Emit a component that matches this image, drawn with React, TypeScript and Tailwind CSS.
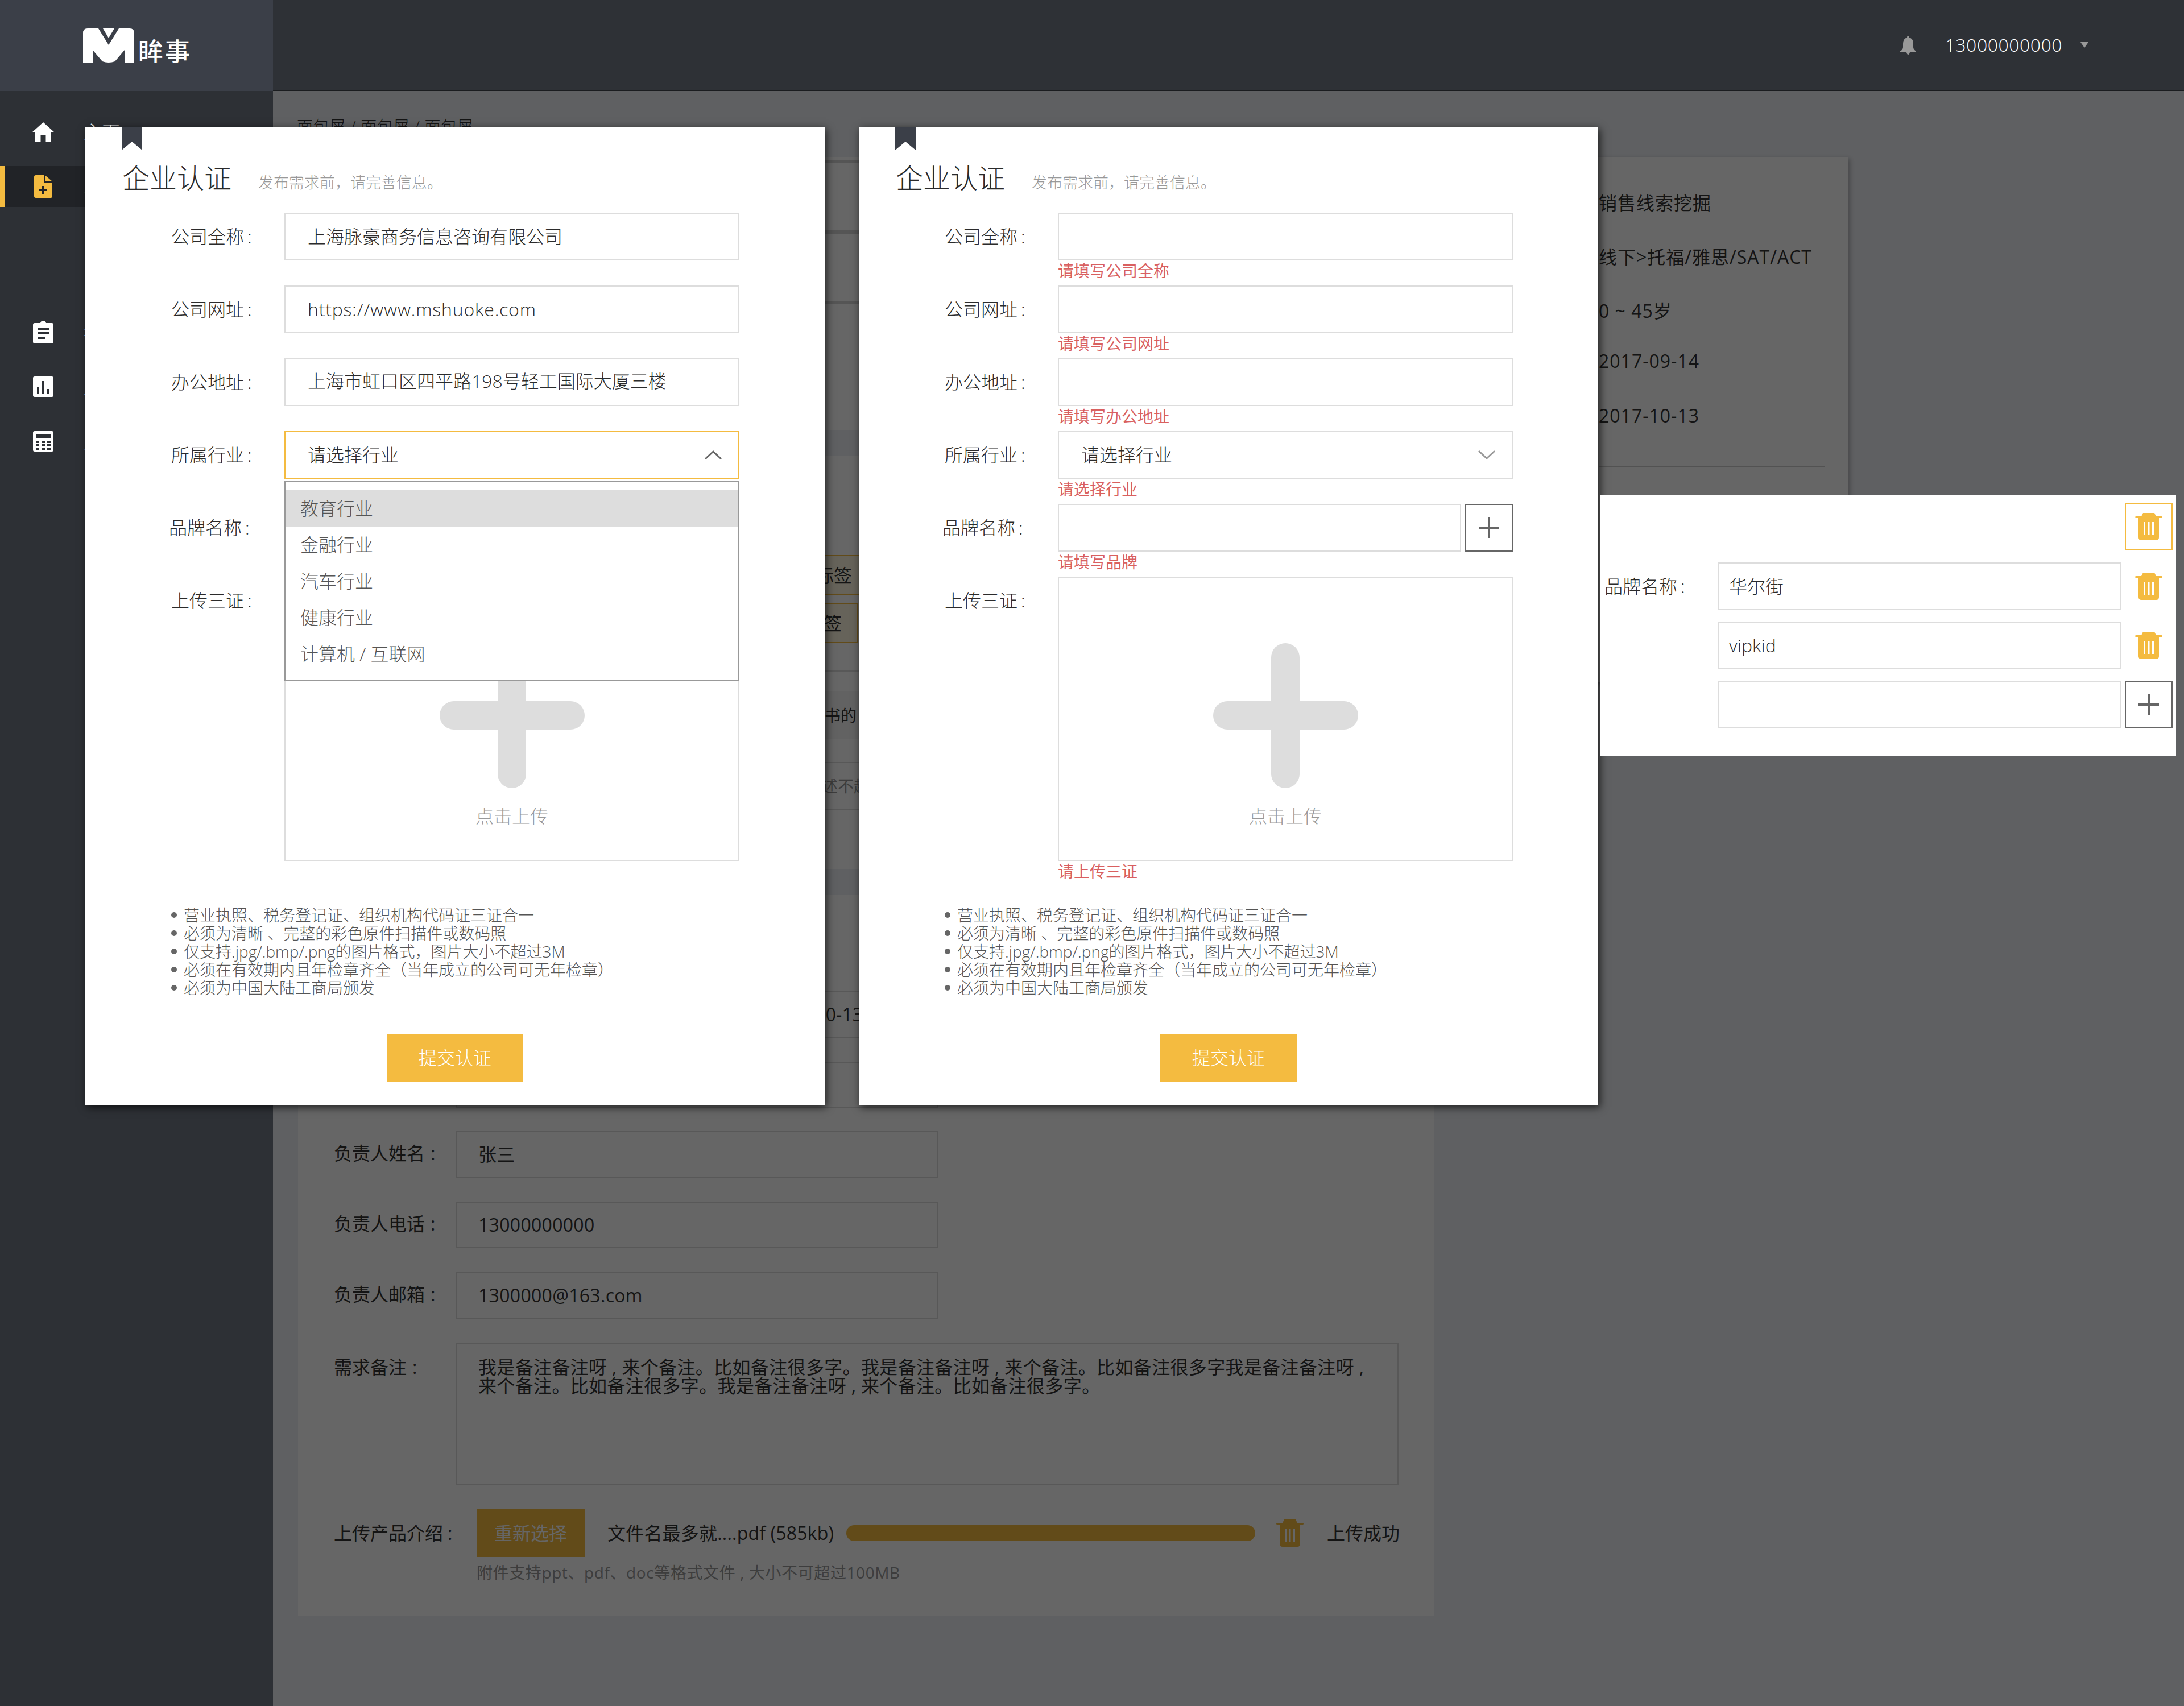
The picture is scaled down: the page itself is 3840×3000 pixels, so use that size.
import type { ReactNode } from "react";

const hints = [
  "营业执照、税务登记证、组织机构代码证三证合一",
  "必须为清晰 、完整的彩色原件扫描件或数码照",
  "仅支持.jpg/.bmp/.png的图片格式\uFF0C图片大小不超过3M",
  "必须在有效期内且年检章齐全\uFF08当年成立的公司可无年检章\uFF09",
  "必须为中国大陆工商局颁发",
];

const industries = ["教育行业", "金融行业", "汽车行业", "健康行业", "计算机 / 互联网"];

function Logo() {
  return (
    <svg width="90" height="60" viewBox="0 0 90 60">
      <path d="M0 60V8Q0 0 8 0H82Q90 0 90 8V60H73V38L56 58Q45 62 34 58L17 38V60Z" fill="#fff" />
      <path d="M27 0H63L45 29Z" fill="#3b3f48" />
      <path d="M35 0H55L45 17Z" fill="#fff" />
    </svg>
  );
}

function HomeIcon() {
  return (
    <svg width="40" height="34" viewBox="0 0 40 34" fill="#fff">
      <path d="M20 0L40 18H34V34H24.5V22H15.5V34H6V18H0Z" />
    </svg>
  );
}

function FilePlusIcon() {
  return (
    <svg width="32" height="40" viewBox="0 0 32 40">
      <path d="M3 0H17V13H32V37Q32 40 29 40H3Q0 40 0 37V3Q0 0 3 0Z" fill="#f4bb40" />
      <path d="M19 0L32 11H19Z" fill="#f4bb40" />
      <path d="M16 19V33M9 26H23" stroke="#212327" strokeWidth="4" />
    </svg>
  );
}

function ClipboardIcon() {
  return (
    <svg width="36" height="40" viewBox="0 0 36 40">
      <path d="M3 4H13Q14 0 18 0T23 4H33Q36 4 36 7V37Q36 40 33 40H3Q0 40 0 37V7Q0 4 3 4Z" fill="#fff" />
      <path d="M8 14H28M8 22H28M8 30H22" stroke="#2d3035" strokeWidth="4" />
    </svg>
  );
}

function ChartIcon() {
  return (
    <svg width="36" height="36" viewBox="0 0 36 36">
      <rect width="36" height="36" rx="3" fill="#fff" />
      <path d="M9 18V30M18 8V30M27 22V30" stroke="#2d3035" strokeWidth="4" />
    </svg>
  );
}

function CalcIcon() {
  return (
    <svg width="36" height="36" viewBox="0 0 36 36">
      <rect width="36" height="36" rx="3" fill="#fff" />
      <rect x="5" y="5" width="26" height="7" fill="#2d3035" />
      <path d="M5 19H31M5 25H31M5 31H31" stroke="#2d3035" strokeWidth="4" strokeDasharray="6 4" />
    </svg>
  );
}

function BellIcon() {
  return (
    <svg width="28" height="33" viewBox="0 0 28 33" fill="#999">
      <path d="M14 0Q16 0 16 3Q23 5 23 14V20Q23 24 28 27V28H0V27Q5 24 5 20V14Q5 5 12 3Q12 0 14 0Z" />
      <path d="M11 29H17Q16 33 14 33T11 29Z" />
    </svg>
  );
}

function TrashIcon({ className }: { className?: string }) {
  return (
    <svg width="48" height="48" viewBox="0 0 48 48" className={className}>
      <path d="M14 0H34L37 6H46.5Q48 6 48 7.5T46.5 9H42V43Q42 48 37 48H11Q6 48 6 43V9H1.5Q0 9 0 7.5T1.5 6H11Z" fill="currentColor" />
      <path d="M15 16H18V39H15ZM22.5 16H25.5V39H22.5ZM30 16H33V39H30Z" fill="#fff" />
    </svg>
  );
}

function ThinPlus() {
  return (
    <svg width="36" height="36" viewBox="0 0 36 36">
      <path d="M18 0V36M0 18H36" stroke="#666" strokeWidth="4" />
    </svg>
  );
}

function Chevron({ up, color }: { up?: boolean; color: string }) {
  return (
    <svg width="32" height="18" viewBox="0 0 32 18" fill="none">
      <path d={up ? "M2 16L16 3L30 16" : "M2 2L16 15L30 2"} stroke={color} strokeWidth="3" />
    </svg>
  );
}

function BigPlus() {
  return (
    <svg width="255" height="255" viewBox="0 0 255 255" fill="#ddd">
      <rect x="102" width="50" height="255" rx="25" />
      <rect y="102" width="255" height="50" rx="25" />
    </svg>
  );
}

function NavItem({ icon, label, active }: { icon: ReactNode; label: string; active?: boolean }) {
  return (
    <div className="h-[96px] flex items-center">
      <div
        className={
          "h-[72px] w-full flex items-center text-[32px] " +
          (active ? "bg-[#212327] border-l-[8px] border-[#f4bb40] pl-[48px] text-[#f4bb40]" : "pl-[56px] text-white")
        }
      >
        <div className="w-[40px] flex justify-center">{icon}</div>
        <span className="ml-[51px]">{label}</span>
      </div>
    </div>
  );
}

function Field({ label, error, children, shift }: { label: string; error?: string; children: ReactNode; shift?: boolean }) {
  return (
    <div className="flex">
      <div className={"w-[350px] h-[84px] leading-[84px] text-[32px] text-[#2b2b2b] " + (shift ? "pl-[147px]" : "pl-[151px]")}>
        {label}
        <span className="ml-[6px]">:</span>
      </div>
      <div className="w-[800px]">
        {children}
        <div className="h-[44px] text-[28px] leading-[36px] font-normal text-[#d9605f]">{error}</div>
      </div>
    </div>
  );
}

function TextBox({ value, className = "leading-[80px]" }: { value?: string; className?: string }) {
  return (
    <div className={"h-[84px] border-2 border-[#ddd] pl-[39px] text-[32px] text-[#2b2b2b] " + className}>{value}</div>
  );
}

function CertModal({ filled }: { filled: boolean }) {
  return (
    <div className="relative w-[1300px] h-[1720px] bg-white shadow-[3px_3px_14px_rgba(0,0,0,0.7)]">
      <svg className="absolute left-[64px] top-0" width="36" height="40" viewBox="0 0 36 40" fill="#3b3f48">
        <path d="M0 0H36V40L18 25L0 40Z" />
      </svg>
      <div className="h-[150px] pt-[59px] pl-[65px] flex items-baseline">
        <span className="text-[48px] leading-[60px] text-[#2b2b2b]">企业认证</span>
        <span className="ml-[47px] text-[27px] text-[#999]">{"发布需求前\uFF0C请完善信息。"}</span>
      </div>

      <Field label="公司全称" error={filled ? undefined : "请填写公司全称"}>
        <TextBox value={filled ? "上海脉豪商务信息咨询有限公司" : ""} />
      </Field>
      <Field label="公司网址" error={filled ? undefined : "请填写公司网址"}>
        <TextBox value={filled ? "https://www.mshuoke.com" : ""} className="leading-[80px] tracking-[0.8px]" />
      </Field>
      <Field label="办公地址" error={filled ? undefined : "请填写办公地址"}>
        <TextBox value={filled ? "上海市虹口区四平路198号轻工国际大厦三楼" : ""} className="leading-[76px]" />
      </Field>
      <Field label="所属行业" error={filled ? undefined : "请选择行业"}>
        <div className={"h-[84px] border-2 flex items-center justify-between pl-[39px] pr-[28px] text-[32px] text-[#2b2b2b] " + (filled ? "border-[#f4bb40]" : "border-[#ddd]")}>
          <span>请选择行业</span>
          <Chevron up={filled} color={filled ? "#666" : "#999"} />
        </div>
      </Field>
      <Field label="品牌名称" error={filled ? undefined : "请填写品牌"} shift>
        <div className="flex justify-between">
          <TextBox className="w-[709px]" />
          <div className="w-[84px] h-[84px] border-2 border-[#666] flex items-center justify-center">
            <ThinPlus />
          </div>
        </div>
      </Field>
      <Field label="上传三证" error={filled ? undefined : "请上传三证"}>
        <div className="h-[500px] border-2 border-[#ddd] flex flex-col items-center pt-[115px]">
          <BigPlus />
          <div className="mt-[29px] text-[32px] leading-[40px] text-[#999]">点击上传</div>
        </div>
      </Field>

      <div className="mt-[35px] pl-[151px] text-[28px] leading-[32px] text-[#555]">
        {hints.map((h) => (
          <div key={h} className="flex">
            <span className="mt-[11px] mr-[12px] w-[10px] h-[10px] rounded-full bg-[#666]" />
            <span>{h}</span>
          </div>
        ))}
      </div>
      <div className="mt-[65px] mx-auto w-[240px] h-[84px] bg-[#f4bb40] text-white text-[32px] leading-[84px] text-center">提交认证</div>

      {filled && (
        <div className="absolute left-[350px] top-[622px] w-[800px] h-[351px] bg-white border-2 border-[#999] pt-[14px]">
          {industries.map((item, i) => (
            <div key={item} className={"h-[64px] leading-[64px] pl-[26px] text-[32px] text-[#555] " + (i === 0 ? "bg-[#ddd]" : "")}>
              {item}
            </div>
          ))}
        </div>
      )}
    </div>
  );
}

function BrandPanel() {
  const rows = ["华尔街", "vipkid", ""];
  return (
    <div className="w-[1012px] h-[460px] bg-white pt-[14px] pr-[6px]">
      <div className="flex justify-end mb-[21px]">
        <div className="w-[84px] h-[84px] border-2 border-[#f4bb40] flex items-center justify-center text-[#f4bb40]">
          <TrashIcon />
        </div>
      </div>
      {rows.map((r, i) => (
        <div key={i} className="flex mb-[20px]">
          <div className="w-[206px] pl-[7px] text-[32px] leading-[84px] text-[#2b2b2b]">
            {i === 0 ? (
              <>
                品牌名称<span className="ml-[6px]">:</span>
              </>
            ) : (
              ""
            )}
          </div>
          <div className="w-[710px] h-[84px] border-2 border-[#ddd] pl-[18px] leading-[80px] text-[32px] text-[#2b2b2b]">{r}</div>
          <div className={"ml-[6px] w-[84px] h-[84px] flex items-center justify-center text-[#f4bb40] " + (i === 2 ? "border-2 border-[#666]" : "")}>
            {i === 2 ? <ThinPlus /> : <TrashIcon />}
          </div>
        </div>
      ))}
    </div>
  );
}

function FormRow({ label, value }: { label: string; value: string }) {
  return (
    <div className="flex h-[82px] mb-[42px]">
      <div className="w-[214px] leading-[78px] text-[32px] text-[#333]">
        {label}
        <span className="ml-[10px]">:</span>
      </div>
      <div className="w-[848px] border-2 border-[#ddd] pl-[38px] leading-[78px] text-[32px] tracking-[0.3px] text-[#333]">{value}</div>
    </div>
  );
}

function RequirementPage() {
  return (
    <div className="pt-[46px] pl-[44px] flex gap-[40px] items-start font-normal">
      <div className="w-[1998px] flex flex-col gap-[44px]">
        <div className="h-[481px] bg-white pt-[5px]">
          <div className="h-[124px] border-t-[6px] border-[#d5d5d5]" />
          <div className="h-[124px] border-t-[6px] border-[#d5d5d5]" />
          <div className="border-t-[6px] border-[#d5d5d5]" />
        </div>

        <div className="h-[728px] bg-white pt-[175px] text-[32px] text-[#333]">
          <div className="ml-[776px] w-[260px] h-[71px] bg-[#fff7e0] border-y-2 border-[#f4bb40] leading-[67px] pl-[134px]">标签</div>
          <div className="mt-[13px] ml-[776px] w-[209px] h-[71px] bg-[#fff7e0] border-2 border-[#f4bb40] leading-[67px] pl-[114px]">标签</div>
          <div className="mt-[48px] border-t-2 border-[#ddd]" />
          <div className="mt-[35px] h-[84px] bg-[#f5f5f5] pl-[814px] leading-[84px] text-[28px]">需求说明书的</div>
          <div className="mt-[40px] border-t-2 border-[#ddd] h-[83px] pl-[893px] leading-[80px] text-[28px] text-[#999]">描述不超过</div>
          <div className="border-t-2 border-[#ddd]" />
        </div>

        <div className="h-[1268px] bg-white pt-[170px] pl-[63px] text-[32px] text-[#333]">
          <div className="ml-[214px] w-[1300px] h-[82px] border-y-2 border-[#ddd] pl-[549px] leading-[78px] mb-[42px]">2017-10-13</div>
          <div className="ml-[214px] w-[848px] h-[82px] border-2 border-[#ddd] mb-[40px]" />
          <FormRow label="负责人姓名" value="张三" />
          <FormRow label="负责人电话" value="13000000000" />
          <FormRow label="负责人邮箱" value="1300000@163.com" />
          <div className="flex h-[250px]">
            <div className="w-[214px] pt-[23px] leading-[40px]">
              需求备注<span className="ml-[10px]">:</span>
            </div>
            <div className="w-[1658px] border-2 border-[#ddd] pl-[38px] pt-[24px] leading-[33px] tracking-[0.35px]">
              我是备注备注呀 , 来个备注。比如备注很多字。我是备注备注呀 , 来个备注。比如备注很多字我是备注备注呀 ,
              <br />
              来个备注。比如备注很多字。我是备注备注呀 , 来个备注。比如备注很多字。
            </div>
          </div>
          <div className="mt-[43px] flex items-center h-[84px]">
            <div className="w-[251px]">
              上传产品介绍<span className="ml-[8px]">:</span>
            </div>
            <div className="w-[190px] h-[84px] bg-[#f4bb40] text-white text-center leading-[84px]">重新选择</div>
            <div className="ml-[40px] w-[420px] tracking-[0.2px]">文件名最多就....pdf (585kb)</div>
            <div className="w-[719px] h-[28px] rounded-full bg-[#f4bb40]" />
            <TrashIcon className="ml-[37px] text-[#f4bb40]" />
            <div className="ml-[41px]">上传成功</div>
          </div>
          <div className="mt-[11px] ml-[251px] text-[28px] leading-[32px] tracking-[0.6px] text-[#999]">附件支持ppt、pdf、doc等格式文件 , 大小不可超过100MB</div>
        </div>
      </div>

      <div className="w-[688px] h-[924px] bg-white shadow-[3px_3px_8px_rgba(0,0,0,0.25)] pl-[249px] pr-[41px] text-[32px] text-[#333]">
        <div className="pt-[57px] tracking-[1px]">
          <div className="h-[95px] leading-[48px]">销售线索挖掘</div>
          <div className="h-[95px] leading-[48px]">线下&gt;托福/雅思/SAT/ACT</div>
          <div className="h-[88px] leading-[48px]">0 ~ 45岁</div>
          <div className="h-[96px] leading-[48px]">2017-09-14</div>
          <div className="leading-[48px]">2017-10-13</div>
        </div>
        <div className="mt-[65px] border-t-2 border-[#ccc]" />
      </div>
    </div>
  );
}

export default function App() {
  return (
    <div className="relative w-[3840px] h-[3000px] flex overflow-hidden font-light [font-family:'Open_Sans','Noto_Sans_CJK_SC',sans-serif]">
      <aside className="w-[480px] bg-[#2d3035] shrink-0">
        <div className="h-[160px] bg-[#3b3f48] flex items-start pt-[50px] pl-[146px]">
          <Logo />
          <span className="ml-[7px] mt-[16px] text-[44px] leading-[48px] tracking-[3px] font-medium text-white">眸事</span>
        </div>
        <nav className="pt-[24px]">
          <NavItem icon={<HomeIcon />} label="主页" />
          <NavItem icon={<FilePlusIcon />} label="发布需求" active />
          <div className="h-[160px]" />
          <NavItem icon={<ClipboardIcon />} label="我的需求" />
          <NavItem icon={<ChartIcon />} label="用户分析" />
          <NavItem icon={<CalcIcon />} label="费用结算" />
        </nav>
      </aside>

      <div className="flex-1 flex flex-col">
        <header className="h-[160px] bg-[#2e3136] border-b-2 border-[#1a1c1f] flex items-center justify-end pr-[168px]">
          <BellIcon />
          <span className="ml-[51px] text-[32px] tracking-[0.5px] text-white">13000000000</span>
          <span className="ml-[32px] w-0 h-0 border-x-[7px] border-t-[10px] border-x-transparent border-t-[#999]" />
        </header>
        <main className="relative flex-1 bg-[#eef0f5]">
          <div className="pl-[42px] pt-[44px] h-[70px] text-[28px] leading-[36px] tracking-[0.7px] text-[#333]">面包屑 / 面包屑 / 面包屑</div>
          <RequirementPage />
          <div className="absolute inset-0 bg-black/60" />
        </main>
      </div>

      <div className="absolute left-[150px] top-[224px]">
        <CertModal filled />
      </div>
      <div className="absolute left-[1510px] top-[224px]">
        <CertModal filled={false} />
      </div>
      <div className="absolute left-[2814px] top-[870px]">
        <BrandPanel />
      </div>
    </div>
  );
}
